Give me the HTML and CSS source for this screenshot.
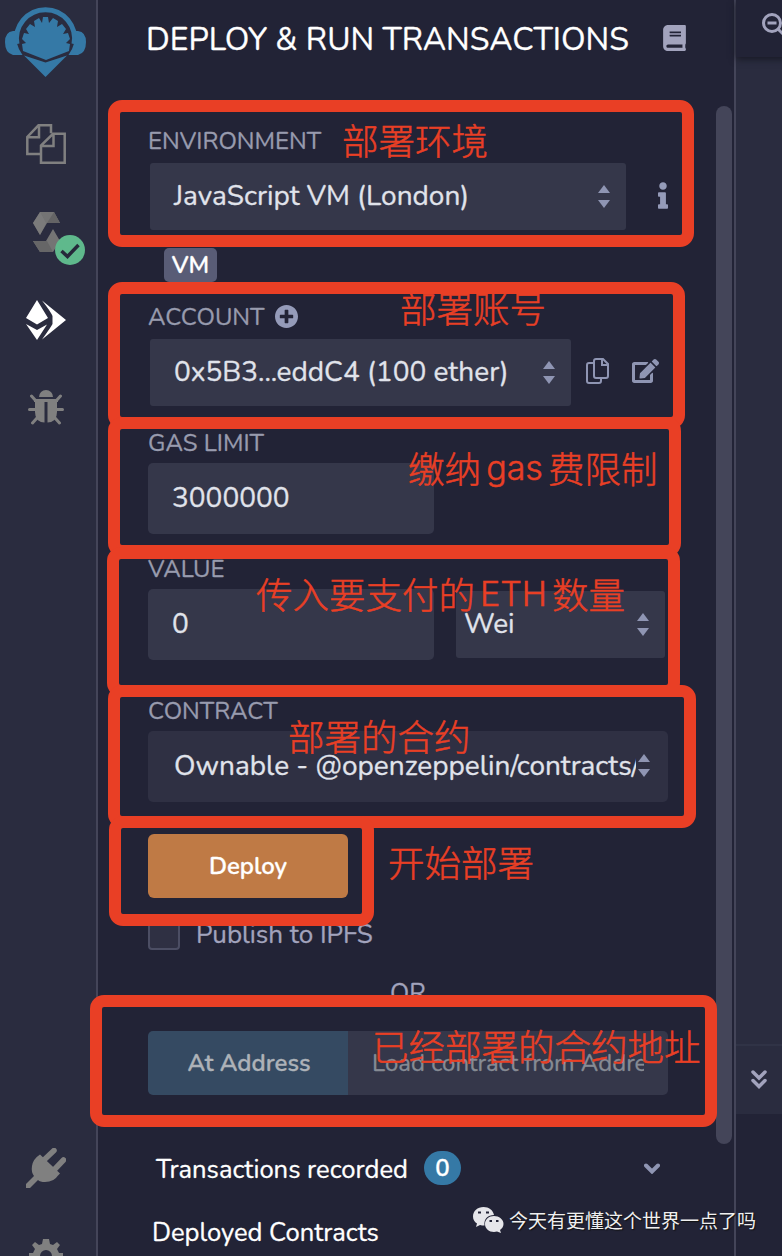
FILE: index.html
```html
<!DOCTYPE html>
<html lang="zh-CN">
<head>
<meta charset="utf-8">
<title>Deploy &amp; Run Transactions</title>
<link rel="stylesheet" href="styles.css">
</head>
<body>
<div class="app">
  <nav class="rail">
    <svg class="logo" viewBox="0 0 82 71" width="82" height="71">
      <path d="M12 38a29 29 0 1 1 57 0" fill="none" stroke="#3579a6" stroke-width="5"/>
      <path d="M12.500 25a28.500 28.500 0 0 0 5 24H8Q0 47 0 36Q0 26 8 25zM68.500 25a28.500 28.500 0 0 1-5 24H73Q81 47 81 36Q81 26 73 25zM19 49.500l21.500 7 21.500-7-21.500 21.500z" fill="#3579a6"/>
      <path d="M18 45l-1-7 4-1-4-4 2-6 5 1-3-5 4-5 5 3-1-6 5-3 3 5 1-6h5l1 6 4-5 5 3-1 6 5-3 4 5-3 5 5-1 2 6-4 4 4 1-1 7-23 9z" fill="#3579a6"/>
    </svg>
    <svg class="files" viewBox="0 0 40 40" width="40" height="40" fill="none" stroke="#808080" stroke-width="2.500">
      <path d="M15 30H1.300V13L12.500 1.300H25v8M1.300 13.300h11.700V1.300M15 38.700V21.500L27 9.800h11.700v28.900zM15 22h12.500V9.800"/>
    </svg>
    <div class="solidity">
      <svg viewBox="0 0 28 42" width="28" height="42">
        <path d="M7 1h14l6 11H14L7 24 0 12z" fill="#747474"/><path d="M7 1l6 11-6 12L0 12z" fill="#808080" opacity=".65"/><path d="M21 1l6 11H14z" fill="#646465"/>
        <path d="M20 18l7 12-7 11H7L0 30h13z" fill="#747474"/><path d="M0 30h14l6 11H7z" fill="#666667"/>
      </svg>
      <svg class="ok" viewBox="0 0 30 30" width="30" height="30"><circle cx="15" cy="15" r="15" fill="#5fb98c"/><path d="M6.500 16l6 5.500L23.500 10" fill="none" stroke="#26283a" stroke-width="3.500"/></svg>
    </div>
    <svg class="run" viewBox="0 0 40 40" width="40" height="40" fill="#fff">
      <path d="M11 0l11 18-11 6.500L0 18zM0 24l11 6 10-5.500L11 40zM16 .500L40 20 16 39.500Q25 27 26.500 24V16Q25 12 16 .500z"/>
    </svg>
    <svg class="bug" viewBox="0 0 36 36" width="36" height="36">
      <path d="M11 8a7 7 0 0 1 14 0zM6 10h24v3h-1v10q0 10-9.500 10.500V13h-3v20.500Q7 33 7 23V13H6z" fill="#808080"/>
      <path d="M8 12L3.500 7M28 12l4.500-5M8 20.500H1.500M28 20.500h6.500M9 29l-4.500 5M27 29l4.500 5" stroke="#808080" stroke-width="3" stroke-linecap="round"/>
    </svg>
    <svg class="plug" viewBox="0 0 40 40" width="40" height="40">
      <path d="M14 6.500l20 19q-3 3-2 2-4 6.500-13 6.500-5 0-7-2L4 40H0v-4l8-8Q5 24 6 18q1-7 8-11.500z" fill="#808080"/>
      <path d="M18 12l10-9.500M28 22l9.500-10" stroke="#808080" stroke-width="5.500" stroke-linecap="round"/>
    </svg>
    <svg class="gear" viewBox="0 0 34 34" width="34" height="34">
      <path fill="#808080" fill-rule="evenodd" d="M14 0h6l1 5 3 1 4-3 3 3-3 4 2 4h4v6h-4l-2 4 3 4-4 4-4-3-3 2v3h-6v-3l-4-2-4 3-4-4 3-4-2-4H0v-6h4l2-4-3-4 3-3 4 3 3-1zM17 11a6 6 0 1 0 0 12 6 6 0 0 0 0-12z"/>
    </svg>
  </nav>

  <main class="panel">
    <header class="head">
      <h1>DEPLOY &amp; RUN TRANSACTIONS</h1>
      <svg viewBox="0 0 448 512" width="23" height="26" fill="#a2a3bd"><path d="M448 360V24c0-13.300-10.700-24-24-24H96C43 0 0 43 0 96v320c0 53 43 96 96 96h328c13.300 0 24-10.700 24-24v-16c0-7.500-3.500-14.300-8.900-18.700-4.200-15.400-4.200-59.300 0-74.700 5.400-4.300 8.900-11.100 8.900-18.600zM128 134c0-3.300 2.700-6 6-6h212c3.300 0 6 2.700 6 6v20c0 3.300-2.700 6-6 6H134c-3.300 0-6-2.700-6-6v-20zm0 64c0-3.300 2.700-6 6-6h212c3.300 0 6 2.700 6 6v20c0 3.300-2.700 6-6 6H134c-3.300 0-6-2.700-6-6v-20zm253.400 250H96c-17.700 0-32-14.300-32-32 0-17.600 14.400-32 32-32h285.400c-1.900 17.100-1.900 46.900 0 64z"/></svg>
    </header>

    <section class="group env">
      <div class="label"><span class="t-env">ENVIRONMENT</span></div>
      <div class="line">
        <div class="select s-env"><span class="t-js">JavaScript VM (London)</span><svg class="sort" viewBox="0 0 12 23" width="12" height="23"><path d="M0 8l6-8 6 8zM0 15l6 8 6-8z"/></svg></div>
        <svg class="info" viewBox="0 0 192 512" width="10" height="27"><path d="M20 424.229h20V279.771H20c-11.046 0-20-8.954-20-20V212c0-11.046 8.954-20 20-20h112c11.046 0 20 8.954 20 20v212.229h20c11.046 0 20 8.954 20 20V492c0 11.046-8.954 20-20 20H20c-11.046 0-20-8.954-20-20v-47.771c0-11.046 8.954-20 20-20zM96 0C56.235 0 24 32.235 24 72s32.235 72 72 72 72-32.235 72-72S135.764 0 96 0z"/></svg>
      </div>
      <div class="vm"><span>VM</span></div>
    </section>

    <section class="group account">
      <div class="label"><span class="t-acc">ACCOUNT</span><svg class="plus" viewBox="8 8 496 496" width="23" height="23"><path d="M256 8C119 8 8 119 8 256s111 248 248 248 248-111 248-248S393 8 256 8zm144 276c0 6.600-5.400 12-12 12h-92v92c0 6.600-5.400 12-12 12h-56c-6.600 0-12-5.400-12-12v-92h-92c-6.600 0-12-5.400-12-12v-56c0-6.600 5.400-12 12-12h92v-92c0-6.600 5.400-12 12-12h56c6.600 0 12 5.400 12 12v92h92c6.600 0 12 5.400 12 12v56z"/></svg></div>
      <div class="line">
        <div class="select s-acc"><span class="t-addr">0x5B3...eddC4 (100 ether)</span><svg class="sort" viewBox="0 0 12 23" width="12" height="23"><path d="M0 8l6-8 6 8zM0 15l6 8 6-8z"/></svg></div>
        <svg class="copy" viewBox="0 0 23 26" width="23" height="26"><path d="M10 1h7l5 5v12q0 2-2 2H10q-2 0-2-2V3q0-2 2-2zM16 1v6h6M7 5H3Q1 5 1 7v16q0 2 2 2h10q2 0 2-2v-2"/></svg>
        <svg class="edit" viewBox="0 0 576 512" width="27" height="24"><path d="M402.600 83.200l90.200 90.200c3.800 3.800 3.800 10 0 13.800L274.400 405.600l-92.800 10.300c-12.400 1.400-22.900-9.100-21.500-21.500l10.300-92.800L388.800 83.200c3.800-3.800 10-3.800 13.800 0zm162-22.900l-48.800-48.800c-15.200-15.200-39.900-15.200-55.200 0l-35.400 35.400c-3.800 3.800-3.800 10 0 13.800l90.200 90.200c3.800 3.800 10 3.800 13.800 0l35.400-35.400c15.200-15.300 15.200-40 0-55.200zM384 346.200V448H64V128h229.800c3.200 0 6.200-1.300 8.500-3.500l40-40c7.600-7.600 2.200-20.500-8.500-20.500H48C21.500 64 0 85.500 0 112v352c0 26.500 21.500 48 48 48h352c26.500 0 48-21.500 48-48V306.200c0-10.700-12.900-16-20.500-8.500l-40 40c-2.200 2.300-3.500 5.300-3.500 8.500z"/></svg>
      </div>
    </section>

    <section class="group gas">
      <div class="label"><span class="t-gas">GAS LIMIT</span></div>
      <div class="input"><span class="t-num">3000000</span></div>
    </section>

    <section class="group value">
      <div class="label"><span class="t-val">VALUE</span></div>
      <div class="line">
        <div class="input"><span>0</span></div>
        <div class="select s-wei"><span class="t-wei">Wei</span><svg class="sort" viewBox="0 0 12 23" width="12" height="23"><path d="M0 8l6-8 6 8zM0 15l6 8 6-8z"/></svg></div>
      </div>
    </section>

    <section class="group contract">
      <div class="label"><span class="t-con">CONTRACT</span></div>
      <div class="select s-con"><span class="t-own">Ownable - @openzeppelin/contracts/</span><svg class="sort" viewBox="0 0 12 23" width="12" height="23"><path d="M0 8l6-8 6 8zM0 15l6 8 6-8z"/></svg></div>
    </section>

    <div class="deploy"><span class="t-dep">Deploy</span></div>
    <div class="publish"><i class="box"></i><span class="t-pub">Publish to IPFS</span></div>
    <div class="or"><span>OR</span></div>
    <div class="at"><div class="at-btn"><span class="t-at">At Address</span></div><div class="at-input"><span class="t-load">Load contract from Address</span></div></div>

    <div class="recorded"><span class="t-rec">Transactions recorded</span><b class="count">0</b>
      <svg viewBox="0 0 16 11" width="16" height="11"><path d="M2 2.500l6 6 6-6"/></svg></div>
    <div class="deployed"><span class="t-ded">Deployed Contracts</span></div>
    <div class="thumb"></div>
  </main>

  <aside class="side">
    <div class="toolbar"><svg viewBox="0 0 26 26" width="26" height="26" fill="none" stroke="#a2a3bd" stroke-width="3"><circle cx="10" cy="10" r="8.500"/><path d="M5.500 10h9M16 16l8 8"/></svg></div>
    <div class="editor"></div>
    <div class="term-head"><svg viewBox="0 0 16 19" width="16" height="19"><path d="M2 2l6 6 6-6M2 10.500l6 6 6-6"/></svg></div>
    <div class="term"></div>
  </aside>

  <div class="mark m-env"></div>
  <div class="mark m-acc"></div>
  <div class="mark m-gas"></div>
  <div class="mark m-val"></div>
  <div class="mark m-con"></div>
  <div class="mark m-dep"></div>
  <div class="mark m-at"></div>
  <div class="note n-env">部署环境</div>
  <div class="note n-acc">部署账号</div>
  <div class="note n-gas">缴纳<span class="latin l-gas">gas</span>费限制</div>
  <div class="note n-val">传入要支付的<span class="latin l-eth">ETH</span>数量</div>
  <div class="note n-con">部署的合约</div>
  <div class="note n-dep">开始部署</div>
  <div class="note n-at">已经部署的合约地址</div>
  <div class="watermark">
    <svg viewBox="0 0 31 26" width="31" height="26"><path fill="#e6e6ea" fill-rule="evenodd" d="M10.500 0C4.500 0 0 4 0 9.500c0 3 1.500 5.500 4 7L3 20l4-2q2 .500 4.500.500C10.500 12 15 8 21 8 20 3 16 0 10.500 0zM5 6.500h3v-2H5zm8 0h3v-2h-3z"/><path fill="#e6e6ea" fill-rule="evenodd" d="M21 9c-5 0-9 3.500-9 8s4 8 9 8l3-.500 4 1.500-1-3c2-1.500 3.500-3.500 3.500-6 0-4.500-4.500-8-9.500-8zm-4.500 6h2.500v-2h-2.500zm6.500 0h2.500v-2H23z"/></svg>
    <span>今天有更懂这个世界一点了吗</span>
  </div>
</div>
</body>
</html>
```
FILE: styles.css
```css
* { box-sizing: border-box; }
body { margin: 0; background: #222336; font-family: Nunito, Lato, "Noto Sans", sans-serif; }
svg { display: block; flex: none; }
.app { position: relative; display: flex; width: 782px; height: 1256px; overflow: hidden; }

.rail { width: 98px; flex: none; background: #2a2c3f; border-right: 2px solid #444559; display: flex; flex-direction: column; }
.logo { margin: 6px 0 0 5px; }
.files { margin: 47px 0 0 26px; }
.solidity { position: relative; margin: 47px 0 0 33px; width: 28px; height: 42px; }
.ok { position: absolute; left: 22px; top: 24px; }
.run { margin: 47px 0 0 26px; }
.bug { margin: 49px 0 0 28px; }
.plug { margin: 723px 0 0 26px; }
.gear { margin: 51px 0 0 29px; }

.panel { position: relative; width: 636px; flex: none; display: flex; flex-direction: column; padding-left: 50px; color: #e0e3eb; -webkit-text-stroke: .3px; }
.panel span { white-space: pre; }
.head { height: 78px; display: flex; align-items: center; padding: 0 0 2px; margin-bottom: 46px; }
.head h1 { margin: 3px 0 0 -2px; width: 517px; font-size: 32px; font-weight: 400; line-height: 40px; color: #fff; white-space: nowrap; }
.label { height: 34px; display: flex; align-items: center; font-size: 24px; color: #989bae; }
.line { display: flex; align-items: center; }
.select, .input { display: flex; align-items: center; justify-content: space-between; background: #35374a; font-size: 28px; height: 67px; border-radius: 3px; padding: 0 16px 2px 24px; }
.input { width: 286px; height: 71px; border-radius: 5px; }
.sort { fill: #8f95b3; margin-top: 2px; }

.env { height: 175px; }
.env .line, .account .line { margin: 5px 0 0 2px; }
.s-env { width: 476px; }
.info { margin: -2px 0 0 32px; fill: #959bb9; }
.vm { margin: 18px 0 0 16px; width: 53px; height: 34px; border-radius: 5px; background: #595c76; color: #fff; font-size: 24px; font-weight: 600; display: flex; align-items: center; justify-content: center; }
.account { height: 127px; }
.account .label, .value .label { padding-top: 2px; }
.account .line { margin-top: 6px; }
.plus { margin: -2px 0 0 10px; fill: #959bb9; }
.s-acc { width: 421px; }
.copy { margin: -3px 0 0 15px; fill: none; stroke: #8f95b3; stroke-width: 2; }
.edit { margin: -3px 0 0 23px; fill: #8f95b3; }
.gas { height: 125px; }
.gas .input { margin-top: 3px; }
.value { height: 143px; }
.value .line { margin-top: 4px; }
.s-wei { margin-left: 22px; width: 209px; padding-left: 8px; }
.contract { height: 140px; }
.contract .select { margin-top: 3px; }
.s-con { width: 520px; height: 71px; border-radius: 5px; padding: 0 18px 2px 26px; background: #2f3043; }
.s-con .t-own { width: 462px; overflow: hidden; }
.s-con .sort { margin-top: 0; }
.deploy { width: 200px; height: 64px; border-radius: 6px; background: #bf7a45; color: #fff; font-size: 24px; font-weight: 600; display: flex; align-items: center; justify-content: center; }
.publish { display: flex; align-items: center; height: 32px; margin-top: 20px; font-size: 26px; color: #a2a3bd; }
.box { width: 32px; height: 32px; margin-right: 16px; border: 2px solid #4c4e64; border-radius: 4px; background: #2f3043; }
.or { margin: 27px 0 0 242px; height: 34px; line-height: 34px; font-size: 25px; color: #a2a3bd; }
.at { display: flex; margin-top: 20px; width: 520px; height: 64px; border-radius: 5px; overflow: hidden; font-size: 24px; }
.at-btn { width: 200px; padding-left: 2px; background: #354a62; color: #adb2b8; font-weight: 600; display: flex; align-items: center; justify-content: center; }
.at-input { width: 320px; padding: 0 24px; background: #35374a; color: #868b94; display: flex; align-items: center; }
.t-load { width: 272px; overflow: hidden; }
.recorded { display: flex; align-items: center; margin: 56px 0 0 8px; height: 34px; font-size: 25.6px; color: #fff; }
.t-rec { width: 268px; padding-top: 2px; }
.count { width: 37px; height: 34px; border-radius: 17px; background: #3579a6; font-size: 24px; font-weight: 600; line-height: 34px; text-align: center; }
.recorded svg { margin-left: 183px; fill: none; stroke: #8f95b3; stroke-width: 4; stroke-linecap: round; }
.deployed { margin: 31px 0 0 4px; height: 34px; line-height: 34px; font-size: 25.6px; color: #fff; }
.thumb { position: absolute; right: 2px; top: 106px; width: 16px; height: 1038px; border-radius: 8px; background: #444559; }

.side { flex: 1; display: flex; flex-direction: column; border-left: 2px solid #444559; background: #2a2c3f; }
.toolbar { height: 57px; background: #222336; padding: 13px 0 0 26px; overflow: hidden; box-shadow: 0 2px 7px #171823; }
.editor { height: 987px; }
.term-head { height: 70px; border-top: 2px solid #303346; padding: 24px 0 0 15px; }
.term-head svg { fill: none; stroke: #a2a3bd; stroke-width: 3.500; stroke-linecap: round; }
.term { flex: 1; background: #222336; }

.mark { position: absolute; border: 12px solid #e93f25; border-radius: 14px; }
.m-env { left: 108px; top: 100px; width: 586px; height: 147px; }
.m-acc { left: 108px; top: 282px; width: 577px; height: 147px; }
.m-gas { left: 108px; top: 417px; width: 573px; height: 140px; }
.m-val { left: 107px; top: 547px; width: 573px; height: 150px; }
.m-con { left: 108px; top: 685px; width: 588px; height: 143px; }
.m-dep { left: 109px; top: 816px; width: 265px; height: 110px; }
.m-at { left: 90px; top: 995px; width: 627px; height: 132px; }
.note { position: absolute; display: flex; align-items: center; height: 40px; line-height: 40px; font-family: "Noto Sans CJK SC", sans-serif; font-size: 36.5px; font-weight: 300; color: #e93f25; white-space: nowrap; -webkit-text-stroke: .5px; }
.latin { font-family: Inter, sans-serif; font-size: 34px; text-align: center; }
.l-gas { width: 67px; }
.l-eth { width: 77px; }
.n-env { left: 342px; top: 120px; }
.n-acc { left: 400px; top: 288px; }
.n-gas { left: 408px; top: 448px; }
.n-val { left: 256px; top: 574px; }
.n-con { left: 288px; top: 716px; }
.n-dep { left: 388px; top: 842px; }
.n-at { left: 372px; top: 1026px; }
.watermark { position: absolute; left: 473px; top: 1206px; display: flex; align-items: center; height: 28px; font-family: "Noto Sans CJK SC", sans-serif; font-size: 19px; color: #f0f0f0; white-space: nowrap; text-shadow: 1px 1px 1px #111; }
.watermark span { margin: -2px 0 0 5px; }
```
